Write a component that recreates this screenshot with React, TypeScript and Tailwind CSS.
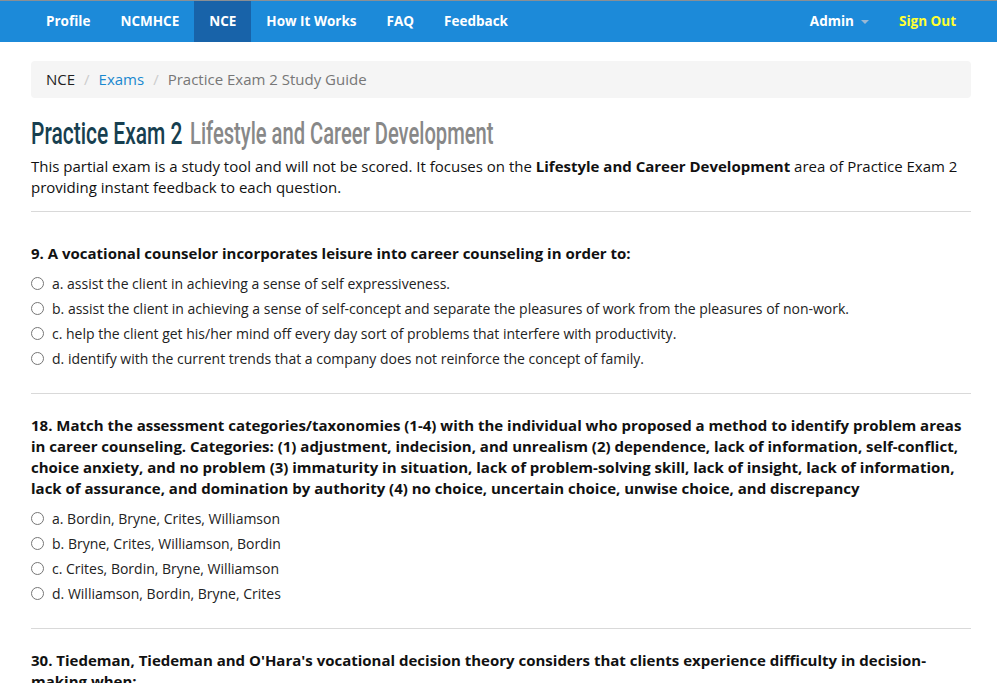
import { useState } from "react";

const navLinks = ["Profile", "NCMHCE", "NCE", "How It Works", "FAQ", "Feedback"];

const questions = [
  {
    id: 9,
    text: "9. A vocational counselor incorporates leisure into career counseling in order to:",
    options: [
      "a. assist the client in achieving a sense of self expressiveness.",
      "b. assist the client in achieving a sense of self-concept and separate the pleasures of work from the pleasures of non-work.",
      "c. help the client get his/her mind off every day sort of problems that interfere with productivity.",
      "d. identify with the current trends that a company does not reinforce the concept of family.",
    ],
  },
  {
    id: 18,
    text: "18. Match the assessment categories/taxonomies (1-4) with the individual who proposed a method to identify problem areas in career counseling. Categories: (1) adjustment, indecision, and unrealism (2) dependence, lack of information, self-conflict, choice anxiety, and no problem (3) immaturity in situation, lack of problem-solving skill, lack of insight, lack of information, lack of assurance, and domination by authority (4) no choice, uncertain choice, unwise choice, and discrepancy",
    options: [
      "a. Bordin, Bryne, Crites, Williamson",
      "b. Bryne, Crites, Williamson, Bordin",
      "c. Crites, Bordin, Bryne, Williamson",
      "d. Williamson, Bordin, Bryne, Crites",
    ],
  },
  {
    id: 30,
    text: "30. Tiedeman, Tiedeman and O'Hara's vocational decision theory considers that clients experience difficulty in decision-making when:",
    options: [
      "a. they are unable to separate their own wants from those of significant others.",
      "b. they lack information about the world of work.",
    ],
  },
];

const Question = ({
  q,
  first,
}: {
  q: (typeof questions)[number];
  first: boolean;
}) => {
  const [picked, setPicked] = useState<number | null>(null);
  return (
    <div>
      <p
        className={`${first ? "mt-[31px]" : "mt-[21px]"} font-bold text-[15px] leading-[21px] text-[#111]`}
      >
        {q.text}
      </p>
      <div className="mt-[7px]">
        {q.options.map((opt, i) => (
          <label
            key={i}
            className="flex items-center h-[25px] text-[14px] text-[#222] cursor-pointer"
          >
            <input
              type="radio"
              name={`q${q.id}`}
              checked={picked === i}
              onChange={() => setPicked(i)}
              className="w-[13px] h-[13px] ml-0 mr-[8px] accent-[#1b8ad8]"
            />
            {opt}
          </label>
        ))}
      </div>
      <hr className="mt-[22px] border-0 border-t border-[#d9d9d9]" />
    </div>
  );
};

export default function App() {
  return (
    <div
      className="min-h-screen bg-white text-[#111]"
      style={{ fontFamily: '"Open Sans", "Noto Sans", sans-serif' }}
    >
      <nav className="h-[42px] bg-[#1c8ad9] border-t border-[#8a8f94]">
        <div className="flex h-full pl-[31px] pr-[26px]">
          <ul className="flex">
            {navLinks.map((link) => (
              <li key={link}>
                <a
                  href="#"
                  className={`flex items-center h-[41px] pb-[1px] px-[15px] text-[13.5px] font-bold text-white ${
                    link === "NCE" ? "bg-[#1863a9]" : ""
                  }`}
                >
                  {link}
                </a>
              </li>
            ))}
          </ul>
          <ul className="flex ml-auto">
            <li>
              <a
                href="#"
                className="flex items-center h-[41px] pb-[1px] px-[15px] text-[13.5px] font-bold text-white"
              >
                Admin
                <span className="ml-[7px] mt-[1px] w-0 h-0 border-x-[4px] border-x-transparent border-t-[4px] border-t-[#9ab8d4]" />
              </a>
            </li>
            <li>
              <a
                href="#"
                className="flex items-center h-[41px] pb-[1px] px-[15px] text-[13.5px] font-bold text-[#ffff33]"
              >
                Sign Out
              </a>
            </li>
          </ul>
        </div>
      </nav>

      <main className="pl-[31px] pr-[26px]">
        <ol className="flex items-center mt-[19px] h-[37px] px-[15px] bg-[#f5f5f5] rounded text-[15px]">
          <li className="text-[#222]">NCE</li>
          <li className="px-[9px] text-[#ccc]">/</li>
          <li>
            <a href="#" className="text-[#1a88cf]">
              Exams
            </a>
          </li>
          <li className="px-[9px] text-[#ccc]">/</li>
          <li className="text-[#777]">Practice Exam 2 Study Guide</li>
        </ol>

        <h1
          className="flex mt-[18px] h-[34px] text-[32px] leading-[34px] font-medium whitespace-nowrap"
          style={{ fontFamily: 'Roboto, "Noto Sans", sans-serif' }}
        >
          <span className="block w-[152px] text-[#173f50] origin-left scale-x-[0.655]">
            Practice Exam 2
          </span>
          <small className="block ml-[7px] text-[32px] font-medium text-[#888] origin-left scale-x-[0.63]">
            Lifestyle and Career Development
          </small>
        </h1>

        <p className="mt-[6px] text-[15px] leading-[21px] text-[#111]">
          This partial exam is a study tool and will not be scored. It focuses
          on the <b>Lifestyle and Career Development</b> area of Practice Exam 2
          providing instant feedback to each question.
        </p>
        <hr className="mt-[13px] border-0 border-t border-[#d9d9d9]" />

        {questions.map((q, i) => (
          <Question key={q.id} q={q} first={i === 0} />
        ))}
      </main>
    </div>
  );
}
